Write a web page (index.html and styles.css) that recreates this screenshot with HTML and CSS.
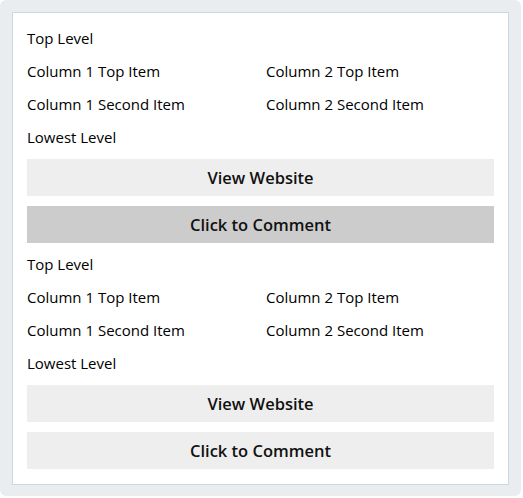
FILE: index.html
```html
<!DOCTYPE html>
<html lang="en">
<head>
    <meta charset="UTF-8">
    <meta name="viewport" content="width=device-width, initial-scale=1.0">
    <title>Listing</title>
    <link rel="stylesheet" href="styles.css">
</head>
<body>
    <div class="frame">
        <div class="panel">
            <div class="entry">
                <div class="rows">
                    <div class="row">Top Level</div>
                    <div class="cols">
                        <div>Column 1 Top Item</div>
                        <div>Column 2 Top Item</div>
                        <div>Column 1 Second Item</div>
                        <div>Column 2 Second Item</div>
                    </div>
                    <div class="row">Lowest Level</div>
                </div>
                <div class="actions">
                    <button class="action">View Website</button>
                    <button class="action active">Click to Comment</button>
                </div>
            </div>
            <div class="entry">
                <div class="rows">
                    <div class="row">Top Level</div>
                    <div class="cols">
                        <div>Column 1 Top Item</div>
                        <div>Column 2 Top Item</div>
                        <div>Column 1 Second Item</div>
                        <div>Column 2 Second Item</div>
                    </div>
                    <div class="row">Lowest Level</div>
                </div>
                <div class="actions">
                    <button class="action">View Website</button>
                    <button class="action">Click to Comment</button>
                </div>
            </div>
        </div>
    </div>
</body>
</html>
```

FILE: styles.css
```css
body {
    font-family: "Open Sans", Arial, sans-serif;
    margin: 0;
    padding: 0;
    color: #000;
}
.frame {
    width: 521px;
    height: 496px;
    box-sizing: border-box;
    padding: 12px;
    background-color: #e9edf0;
    border-radius: 6px;
}
.panel {
    background-color: #fff;
    border: 1px solid #cbd8e3;
    padding: 15px 14px;
    display: flex;
    flex-direction: column;
    gap: 11px;
}
.entry {
    display: flex;
    flex-direction: column;
    gap: 12px;
}
.rows {
    display: flex;
    flex-direction: column;
    gap: 13px;
    font-size: 15px;
    line-height: 20px;
}
.cols {
    display: grid;
    grid-template-columns: 1fr 1fr;
    column-gap: 11px;
    row-gap: 13px;
}
.actions {
    display: flex;
    flex-direction: column;
    gap: 10px;
}
.action {
    display: block;
    width: 100%;
    height: 37px;
    border: none;
    background-color: #eeeeee;
    font-family: "Open Sans", Arial, sans-serif;
    font-size: 16.5px;
    font-weight: 600;
    color: #111;
    text-align: center;
    cursor: pointer;
    padding: 0;
}
.action.active {
    background-color: #cccccc;
}
```
